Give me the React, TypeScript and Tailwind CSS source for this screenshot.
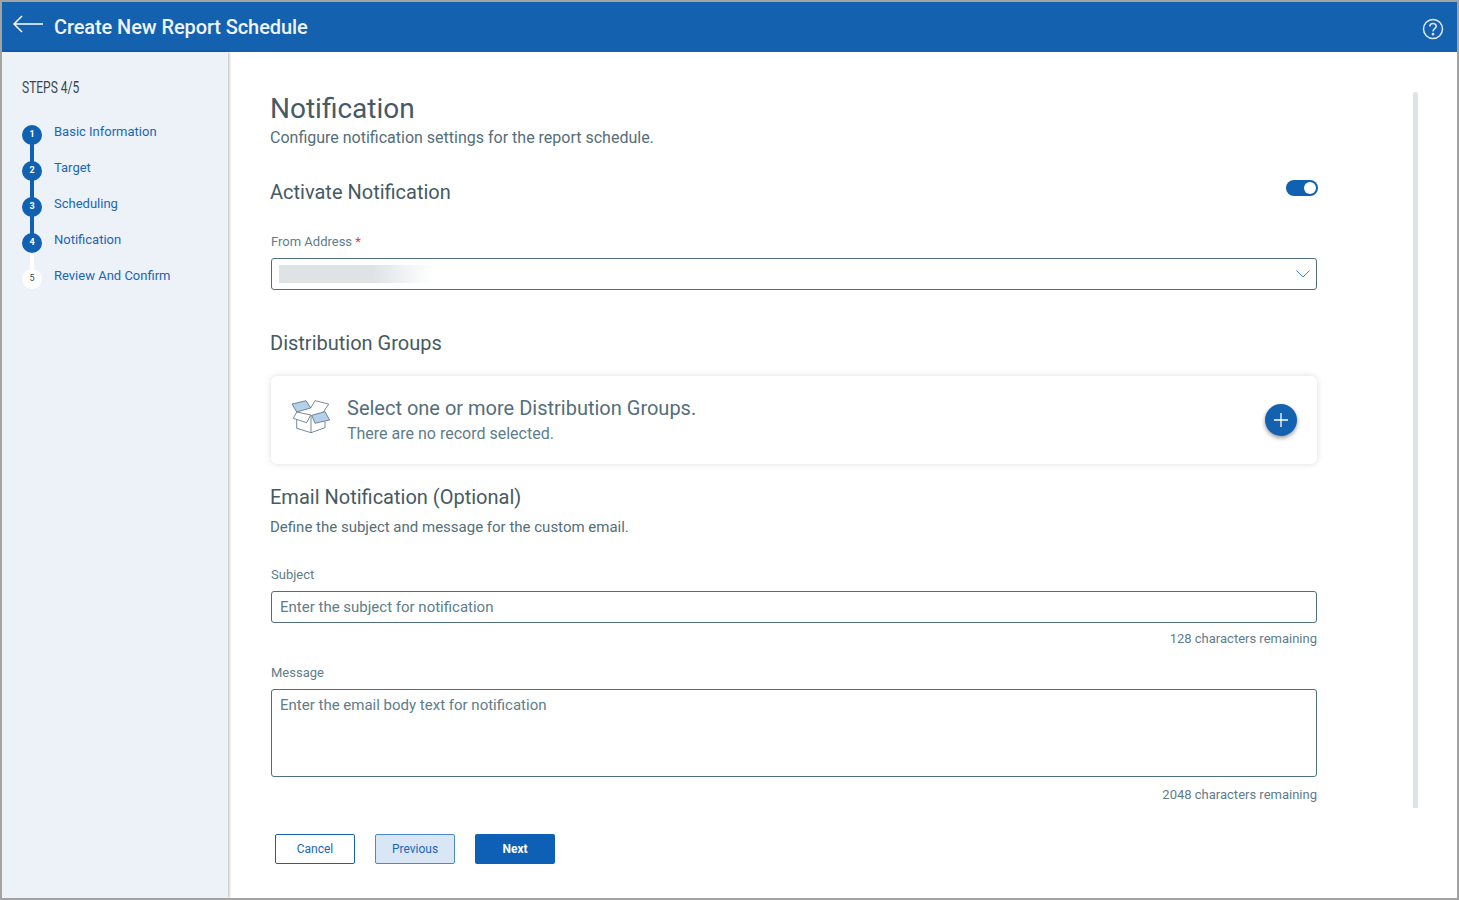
const steps = [
  { n: 1, label: 'Basic Information', done: true },
  { n: 2, label: 'Target', done: true },
  { n: 3, label: 'Scheduling', done: true },
  { n: 4, label: 'Notification', done: true },
  { n: 5, label: 'Review And Confirm', done: false },
]

function StepRow({ n, label, done, last }: { n: number; label: string; done: boolean; last: boolean }) {
  return (
    <div className="flex h-9 gap-3">
      <div className="relative w-5 shrink-0">
        {!last && (
          <div className={`absolute left-2 top-[11px] h-9 w-1 ${n === 4 ? 'bg-white' : 'bg-[#1161b2]'}`} />
        )}
        <div
          className={`relative mt-[2px] flex h-5 w-5 items-center justify-center rounded-full text-[9px] font-bold ${
            done ? 'bg-[#1161b2] text-white' : 'bg-white font-normal text-[#37474f]'
          }`}
        >
          {n}
        </div>
      </div>
      <span className="text-[13px] leading-[18px] text-[#1a66b5]">{label}</span>
    </div>
  )
}

function BoxIcon() {
  return (
    <svg width="40" height="36" viewBox="0 0 40 36" fill="none" stroke="#546e7a" strokeWidth="0.8" className="-mt-[8px]">
      <path d="M2 6 L16 2.7 L20.7 10 L6.7 14 Z" fill="#b5d0ea" />
      <path d="M20.7 10 L25 2.7 L38.7 6 L33.3 14.3" fill="#fff" />
      <path d="M6.7 21.3 V30.3 L21 34.7 L35 29.7 V23.7" />
      <path d="M21 17 V34.7" />
      <path d="M6.7 14 L20.7 17 L16.7 24.7 L3.3 20.3 Z" fill="#fff" />
      <path d="M21.7 17.3 L35 13.7 L39.6 22 L25 25.3 Z" fill="#b5d0ea" />
    </svg>
  )
}

export default function App() {
  return (
    <div className="flex h-[900px] w-[1459px] flex-col overflow-hidden border-2 border-[#a3a3a3] bg-white font-['Roboto',sans-serif]">
      <header className="flex h-[50px] shrink-0 items-center justify-between bg-[#1461b0] pl-[11px] pr-[13px]">
        <div className="flex items-center gap-[11px]">
          <svg width="30" height="18" viewBox="0 0 30 18" fill="none" stroke="#fff" strokeWidth="1.5" className="-mt-[6px]">
            <path d="M30 9 H1 M9 1 L1 9 L9 17" />
          </svg>
          <h1 className="text-[20px] font-medium tracking-[-0.1px] text-[#eef4fa]">Create New Report Schedule</h1>
        </div>
        <svg width="22" height="22" viewBox="0 0 22 22" fill="none" stroke="#dfe9f4" strokeWidth="1.5" className="mt-[3px]">
          <circle cx="11" cy="11" r="9.5" />
          <path d="M7.8 8.6 C7.8 6.6 9.3 5.5 11 5.5 C12.8 5.5 14.2 6.7 14.2 8.3 C14.2 10.6 11 10.7 11 13.4" />
          <circle cx="11" cy="16.2" r="0.6" fill="#dfe9f4" />
        </svg>
      </header>

      <div className="flex min-h-0 flex-1">
        <aside className="w-[226px] shrink-0 bg-[#edf2f9] pl-5 pt-[27px] shadow-[1px_0_3px_rgba(0,0,0,0.3)]">
          <div className="w-[72px] origin-left scale-x-[0.75] text-[16px] leading-[18px] whitespace-nowrap text-[#37474f]">STEPS 4/5</div>
          <div className="mt-[26px] flex flex-col">
            {steps.map((s, i) => (
              <StepRow key={s.n} n={s.n} label={s.label} done={s.done} last={i === steps.length - 1} />
            ))}
          </div>
        </aside>

        <main className="flex min-w-0 flex-1 pl-[42px]">
          <div className="w-[1047px] shrink-0 pt-[39px]">
            <h2 className="text-[28px] leading-[36px] text-[#455a64]">Notification</h2>
            <p className="mt-[1px] text-[16px] leading-[20px] text-[#546e7a]">Configure notification settings for the report schedule.</p>

            <div className="mt-[31px] flex items-start justify-between">
              <h3 className="text-[20px] leading-[26px] text-[#455a64]">Activate Notification</h3>
              <div className="mt-[1px] mr-[-1px] flex h-4 w-8 items-center justify-end rounded-full bg-[#1161b2] pr-[2px]">
                <div className="h-3 w-3 rounded-full bg-white" />
              </div>
            </div>

            <label className="mt-[28px] block pl-[1px] text-[13px] leading-[18px] text-[#607d8b]">
              From Address <span className="text-[#e53935]">*</span>
            </label>
            <div className="mt-[7px] ml-[1px] flex h-8 items-center justify-between rounded-[3px] border border-[#4f6f7f] pl-[7px] pr-[6px]">
              <div className="h-[18px] w-[154px] bg-gradient-to-r from-[#dfe3e6] from-60% to-white" />
              <svg width="14" height="8" viewBox="0 0 14 8" fill="none" stroke="#3d86d0" strokeWidth="1">
                <path d="M0.5 0.5 L7 7 L13.5 0.5" />
              </svg>
            </div>

            <h3 className="mt-[40px] text-[20px] leading-[26px] text-[#455a64]">Distribution Groups</h3>

            <div className="mt-[20px] ml-[1px] flex h-[88px] items-center justify-between rounded-[6px] bg-white pl-[19px] pr-[20px] shadow-[0_0_6px_rgba(0,0,0,0.14)]">
              <div className="flex items-center gap-[17px]">
                <BoxIcon />
                <div>
                  <div className="text-[20px] leading-[26px] text-[#546e7a]">Select one or more Distribution Groups.</div>
                  <div className="mt-[2px] text-[16px] leading-[22px] text-[#607d8b]">There are no record selected.</div>
                </div>
              </div>
              <div className="flex h-8 w-8 items-center justify-center rounded-full bg-[#1461b0] shadow-[0_2px_4px_rgba(0,0,0,0.4)]">
                <svg width="16" height="16" viewBox="0 0 16 16" stroke="#fff" strokeWidth="1.3">
                  <path d="M8 1 V15 M1 8 H15" />
                </svg>
              </div>
            </div>

            <h3 className="mt-[20px] text-[20px] leading-[26px] text-[#455a64]">Email Notification (Optional)</h3>
            <p className="mt-[7px] text-[15px] leading-[20px] text-[#546e7a]">Define the subject and message for the custom email.</p>

            <label className="mt-[29px] block pl-[1px] text-[13px] leading-[18px] text-[#607d8b]">Subject</label>
            <div className="mt-[7px] ml-[1px] flex h-8 items-center rounded-[3px] border border-[#4f6f7f] pl-[8px] text-[15px] text-[#607d8b]">
              Enter the subject for notification
            </div>
            <div className="mt-[7px] text-right text-[13px] leading-[18px] text-[#607d8b]">128 characters remaining</div>

            <label className="mt-[16px] block pl-[1px] text-[13px] leading-[18px] text-[#607d8b]">Message</label>
            <div className="mt-[7px] ml-[1px] h-[88px] rounded-[3px] border border-[#4f6f7f] pl-[8px] pt-[5px] text-[15px] leading-[20px] text-[#607d8b]">
              Enter the email body text for notification
            </div>
            <div className="mt-[9px] text-right text-[13px] leading-[18px] text-[#607d8b]">2048 characters remaining</div>

            <div className="mt-[30px] flex gap-5 pl-[5px]">
              <button type="button" className="h-[30px] w-20 rounded-[2px] border border-[#1461b0] bg-white text-[12px] text-[#1a66b5]">
                Cancel
              </button>
              <button type="button" className="h-[30px] w-20 rounded-[2px] border border-[#4a8ac8] bg-[#d9e6f5] text-[12px] text-[#1a66b5]">
                Previous
              </button>
              <button type="button" className="h-[30px] w-20 rounded-[2px] bg-[#0d60b5] text-[12px] font-bold text-white">
                Next
              </button>
            </div>
          </div>

          <div className="ml-[96px] mt-10 h-[716px] w-[5px] rounded-t-[2px] bg-[#dde4e8]" />
        </main>
      </div>
    </div>
  )
}
